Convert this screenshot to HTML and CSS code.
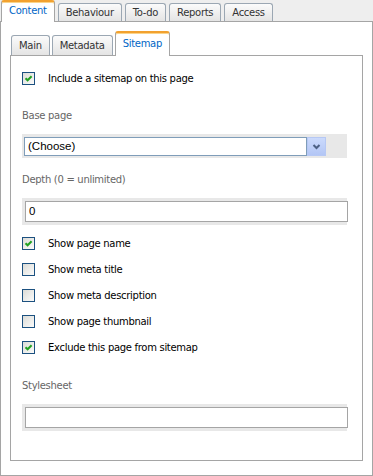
FILE: index.html
```html
<!DOCTYPE html>
<html lang="en">
<head>
  <meta charset="UTF-8">
  <title>Sitemap</title>
  <link rel="stylesheet" href="styles.css">
</head>
<body>
  <div class="tabs top-tabs">
    <div class="tab active">Content</div>
    <div class="tab">Behaviour</div>
    <div class="tab">To-do</div>
    <div class="tab">Reports</div>
    <div class="tab">Access</div>
  </div>

  <div class="panel outer">
    <div class="tabs sub-tabs">
      <div class="tab">Main</div>
      <div class="tab">Metadata</div>
      <div class="tab active">Sitemap</div>
    </div>

    <div class="panel inner">
      <div class="check-row first">
        <span class="box"><svg viewBox="0 0 11 11" width="11" height="11"><path d="M2.5 5.2 L4.6 7.3 L8.6 3.2" /></svg></span>
        <span class="check-label">Include a sitemap on this page</span>
      </div>

      <div class="field-label label-base">Base page</div>
      <div class="band band-select">
        <div class="select">
          <span class="select-text">(Choose)</span>
        </div>
        <span class="select-btn"><svg viewBox="0 0 17 17" width="17" height="17"><path d="M5.5 7 L8.5 10 L11.5 7" /></svg></span>
      </div>

      <div class="field-label label-depth">Depth (0 = unlimited)</div>
      <div class="band band-input">
        <div class="text-input">0</div>
      </div>

      <div class="checks">
        <div class="check-row">
          <span class="box"><svg viewBox="0 0 11 11" width="11" height="11"><path d="M2.5 5.2 L4.6 7.3 L8.6 3.2" /></svg></span>
          <span class="check-label">Show page name</span>
        </div>
        <div class="check-row">
          <span class="box"></span>
          <span class="check-label">Show meta title</span>
        </div>
        <div class="check-row">
          <span class="box"></span>
          <span class="check-label">Show meta description</span>
        </div>
        <div class="check-row">
          <span class="box"></span>
          <span class="check-label">Show page thumbnail</span>
        </div>
        <div class="check-row">
          <span class="box"><svg viewBox="0 0 11 11" width="11" height="11"><path d="M2.5 5.2 L4.6 7.3 L8.6 3.2" /></svg></span>
          <span class="check-label">Exclude this page from sitemap</span>
        </div>
      </div>

      <div class="field-label label-style">Stylesheet</div>
      <div class="band band-input">
        <div class="text-input"></div>
      </div>
    </div>
  </div>
</body>
</html>
```

FILE: styles.css
```css
body {
  margin: 0;
  background: #eeeeee;
  font-family: 'DejaVu Sans', Verdana, sans-serif;
  font-size: 10px;
  letter-spacing: -0.3px;
  color: #000;
}
.tabs {
  display: flex;
  align-items: flex-end;
  gap: 3px;
  padding-left: 1px;
}
.top-tabs {
  height: 21px;
}
.sub-tabs {
  height: 24px;
  gap: 2px;
}
.tab {
  box-sizing: border-box;
  height: 18px;
  padding: 0 7px;
  line-height: 17px;
  border: 1px solid #9ba7b3;
  border-bottom: none;
  border-radius: 3px 3px 0 0;
  background: linear-gradient(#fbfbfb, #e4e4e4);
  color: #333;
}
.tab.active {
  position: relative;
  z-index: 1;
  height: 22px;
  margin-bottom: -1px;
  line-height: 18px;
  background: #fff;
  color: #0066c6;
  border-color: #a5a5a5;
  border-top: 2px solid #f2a12f;
  box-shadow: inset 0 1px 0 #fbd489;
}
.sub-tabs .tab {
  height: 20px;
  line-height: 19px;
}
.sub-tabs .tab.active {
  height: 25px;
  line-height: 22px;
}
.panel {
  box-sizing: border-box;
  border: 1px solid #a5a5a5;
  background: #fff;
}
.outer {
  height: 455px;
  padding: 9px 9px 14px 9px;
}
.inner {
  height: 406px;
  padding: 16px 15px 0 11px;
}
.check-row {
  display: flex;
  align-items: center;
  height: 13px;
}
.check-row.first {
  margin-bottom: 25px;
}
.checks {
  display: flex;
  flex-direction: column;
  gap: 13px;
  margin-top: 12px;
}
.box {
  box-sizing: border-box;
  width: 13px;
  height: 13px;
  border: 1px solid #1c5180;
  background: linear-gradient(135deg, #dcdcd7, #fbfbfa);
  display: flex;
  align-items: center;
  justify-content: center;
}
.box svg path {
  fill: none;
  stroke: #21a121;
  stroke-width: 2;
}
.check-label {
  margin-left: 13px;
  line-height: 13px;
}
.field-label {
  line-height: 12px;
  color: #666;
}
.label-depth {
  margin-top: 16px;
}
.label-style {
  margin-top: 26px;
}
.band {
  margin-top: 12px;
  background: #e8e8e8;
  display: flex;
}
.band-select {
  box-sizing: border-box;
  height: 24px;
  padding: 3px 0 2px 2px;
}
.select {
  box-sizing: border-box;
  width: 283px;
  height: 19px;
  border: 1px solid #7f9db9;
  background: #fff;
  padding-left: 3px;
  font-family: 'Liberation Sans', Arial, sans-serif;
  font-size: 11.5px;
  letter-spacing: 0;
  line-height: 17px;
}
.select-btn {
  box-sizing: border-box;
  width: 19px;
  height: 19px;
  border: 1px solid #b6c8f4;
  background: linear-gradient(#cbdafc, #b3c6f5);
  display: flex;
  align-items: center;
  justify-content: center;
}
.select-btn svg path {
  fill: none;
  stroke: #4d6185;
  stroke-width: 2;
}
.band-input {
  box-sizing: border-box;
  height: 27px;
  padding: 3px 0 3px 3px;
}
.text-input {
  box-sizing: border-box;
  flex: 1;
  margin-right: -1px;
  height: 21px;
  border: 1px solid #a5a5a5;
  background: #fff;
  padding-left: 3px;
  font-family: 'Liberation Sans', Arial, sans-serif;
  font-size: 11.5px;
  letter-spacing: 0;
  line-height: 19px;
}
```
